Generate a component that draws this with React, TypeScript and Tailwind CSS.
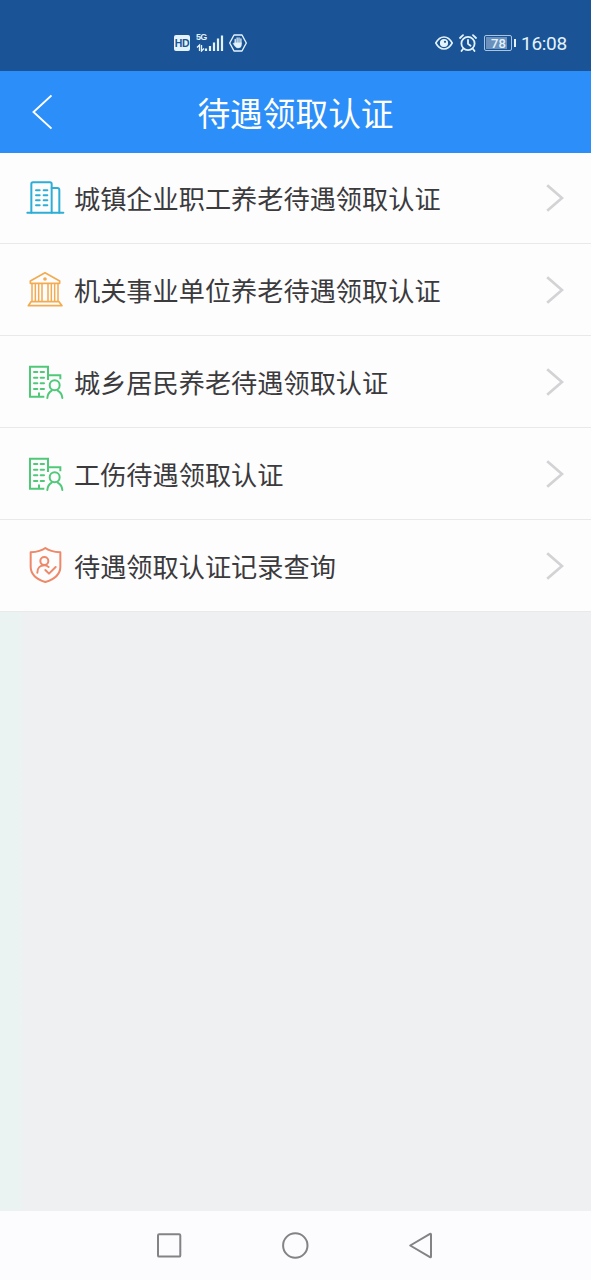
import type { ReactNode } from 'react';

const IconFrame = ({ color, children }: { color: string; children: ReactNode }) => (
  <svg
    viewBox="21 30 108 108"
    className={`w-[36px] h-[36px] shrink-0 overflow-visible ${color}`}
    fill="none"
    stroke="currentColor"
    strokeWidth="6"
    strokeLinecap="round"
    strokeLinejoin="round"
  >
    {children}
  </svg>
);

const CompanyIcon = () => (
  <IconFrame color="text-[#2eaed6]">
    <path d="M22 128H130" />
    <path d="M34 128V42Q34 37 39 37H90Q95 37 95 42V128" />
    <path d="M95 54H112Q118 54 118 60V128" />
    <path d="M48 61H59M71 61H82M48 76H59M71 76H82M48 91H59M71 91H82M48 106H59M71 106H82" />
  </IconFrame>
);

const InstitutionIcon = () => (
  <IconFrame color="text-[#f2ab50]">
    <path d="M75 32L119 57V64H31V57Z" strokeWidth="5" />
    <circle cx="75" cy="51" r="2.5" />
    <path d="M36 66V118M46 66V118M56 66V118M66 66V118M84 66V118M94 66V118M104 66V118M114 66V118" strokeWidth="4.5" />
    <path d="M33 119H117L126 131H25Z" strokeWidth="5" />
  </IconFrame>
);

const ResidentIcon = () => (
  <IconFrame color="text-[#4fc978]">
    <path d="M73 128H30V38H84V78" strokeLinecap="butt" strokeLinejoin="miter" />
    <path d="M84 64H121V76" strokeLinecap="butt" strokeLinejoin="miter" />
    <path d="M42 54H52M62 54H72M42 71H52M62 71H72M42 88H52M62 88H72M42 105H52M62 105H72M57 118V127" />
    <circle cx="104" cy="94" r="15" />
    <path d="M82 132Q83 117 95 110M113 110Q126 117 127 132" />
  </IconFrame>
);

const RecordIcon = () => (
  <IconFrame color="text-[#ed8868]">
    <path d="M76 30C66 38 49 42 32 43V86C32 111 54 125 76 132C99 125 121 111 121 86V43C103 42 86 38 76 30Z" />
    <circle cx="73" cy="69" r="12" />
    <path d="M52 104C52 90 61 82 73 82C78 82 82 84 86 87" />
    <path d="M76 96L87 107L107 87" />
  </IconFrame>
);

const items = [
  { label: '城镇企业职工养老待遇领取认证', icon: <CompanyIcon /> },
  { label: '机关事业单位养老待遇领取认证', icon: <InstitutionIcon /> },
  { label: '城乡居民养老待遇领取认证', icon: <ResidentIcon /> },
  { label: '工伤待遇领取认证', icon: <ResidentIcon /> },
  { label: '待遇领取认证记录查询', icon: <RecordIcon /> },
];

const StatusBar = () => (
  <div className="h-[71px] shrink-0 bg-[#1a5496] text-[#e4f3fb] flex items-center justify-between pt-[15px] pl-[174px] pr-[24px]">
    <div className="flex items-center">
      <div className="w-[16px] h-[16px] rounded-[2px] bg-[#e4f3fb] text-[#1a5496] font-['Liberation_Sans',sans-serif] text-[10.5px] leading-[16px] font-bold text-center tracking-[-0.4px]">HD</div>
      {/* Network type and signal bars */}
      <div className="relative w-[28px] h-[18px] ml-[6px]">
        <span className="absolute left-0 -top-px font-['Liberation_Sans',sans-serif] text-[9px] leading-[9px] font-bold tracking-[-0.8px]">5G</span>
        <svg viewBox="0 0 28 18" className="w-[28px] h-[18px]" fill="none" stroke="currentColor">
          <path d="M3.5 17V11L1 13.5M5.5 11V17L8 14.5" strokeWidth="1.3" />
          <path d="M10 14.5V17M14 12V17M18 8.5V17M22 4.5V17M26 1.5V17" strokeWidth="2.2" />
        </svg>
      </div>
      <svg viewBox="0 0 18 18" className="w-[18px] h-[18px] ml-[5px]" fill="none" stroke="currentColor" strokeLinejoin="round" strokeLinecap="round">
        <path d="M5 1H13L17.3 9L13 17H5L0.7 9Z" strokeWidth="1.4" />
        <path d="M6.2 9V5.5M8.1 9V4M10 9V4M11.9 9V5" strokeWidth="1.3" />
        <path d="M5.6 8.8H12.5V10.5Q12.5 14 9 14Q7 14 5.8 12L4 9.3L5.3 9.4Z" fill="currentColor" strokeWidth="0.4" />
      </svg>
    </div>
    <div className="flex items-center">
      <svg viewBox="0 0 18 14" className="w-[18px] h-[14px]" fill="none" stroke="currentColor" strokeWidth="1.6">
        <path d="M0.8 7Q4 1 9 1T17.2 7Q14 13 9 13T0.8 7Z" />
        <circle cx="9" cy="7" r="3.3" fill="currentColor" />
        <circle cx="10" cy="5.8" r="1.1" fill="#1a5496" stroke="none" />
      </svg>
      <svg viewBox="0 0 18 18" className="w-[18px] h-[18px] ml-[6px]" fill="none" stroke="currentColor" strokeWidth="1.8" strokeLinecap="round">
        <circle cx="9" cy="9.5" r="6.6" />
        <path d="M9 6V9.8L11.5 11.8M1 4L4 1.2M17 4L14 1.2M4 15L2.5 17M14 15L15.5 17" />
      </svg>
      <div className="ml-[7px] w-[28px] h-[16px] rounded-[2px] border border-[#a9c6de] p-px">
        <div className="h-full w-[21px] bg-[#6a90bb] font-['Roboto',sans-serif] text-[13px] leading-[13px] font-medium whitespace-nowrap pl-[5px]">78</div>
      </div>
      <div className="w-[2px] h-[8px] ml-[2px] bg-[#e4f3fb]" />
      <span className="ml-[5px] mt-px font-['Roboto',sans-serif] text-[19px] leading-[20px] w-[46px] tracking-[-0.3px]">16:08</span>
    </div>
  </div>
);

const Header = () => (
  <div className="relative h-[82px] shrink-0 bg-[#2c8ef8] text-white flex items-center justify-center">
    <svg viewBox="0 0 20 36" className="absolute left-[32px] top-[23px] w-[20px] h-[36px]" fill="none" stroke="currentColor" strokeWidth="1.9">
      <path d="M19.5 1.5L1.5 18L19.5 34.5" />
    </svg>
    <h1 className="text-[32.7px] leading-[40px] font-normal">待遇领取认证</h1>
  </div>
);

const NavBar = () => (
  <div className="h-[69px] shrink-0 bg-[#fcfbfe] text-[#838285]">
    <svg viewBox="0 0 591 69" className="w-full h-full" fill="none" stroke="currentColor" strokeWidth="2" strokeLinejoin="round">
      <rect x="158" y="23.3" width="22.3" height="22.3" rx="1.2" />
      <circle cx="295.3" cy="34.5" r="12.2" />
      <path d="M410.2 34.5L430 22.8Q431 22.3 431 23.5V45.5Q431 46.7 430 46.2Z" />
    </svg>
  </div>
);

const App = () => (
  <div className="w-full h-[1280px] flex flex-col overflow-hidden bg-[#eff0f2] font-['Noto_Sans_CJK_SC',sans-serif]">
    <StatusBar />
    <Header />
    <div className="shrink-0">
      {items.map((item) => (
        <div key={item.label} className="h-[92px] first:h-[91px] flex items-center pl-[27px] pr-[27px] bg-[#fefdfe] border-b border-[#e9e9ec]">
          {item.icon}
          <span className="ml-[11px] flex-1 text-[26.2px] leading-[36px] text-[#3b3a3d] whitespace-nowrap">{item.label}</span>
          <svg viewBox="0 0 18 28" className="w-[18px] h-[28px] shrink-0" fill="none" stroke="#d3d3d6" strokeWidth="2.8">
            <path d="M1.2 1.2L16 14L1.2 26.8" />
          </svg>
        </div>
      ))}
    </div>
    <div className="flex-1 bg-linear-to-r from-[#eaf3f2] from-[14px] to-[#eff0f2] to-[27px]" />
    <NavBar />
  </div>
);

export default App;
